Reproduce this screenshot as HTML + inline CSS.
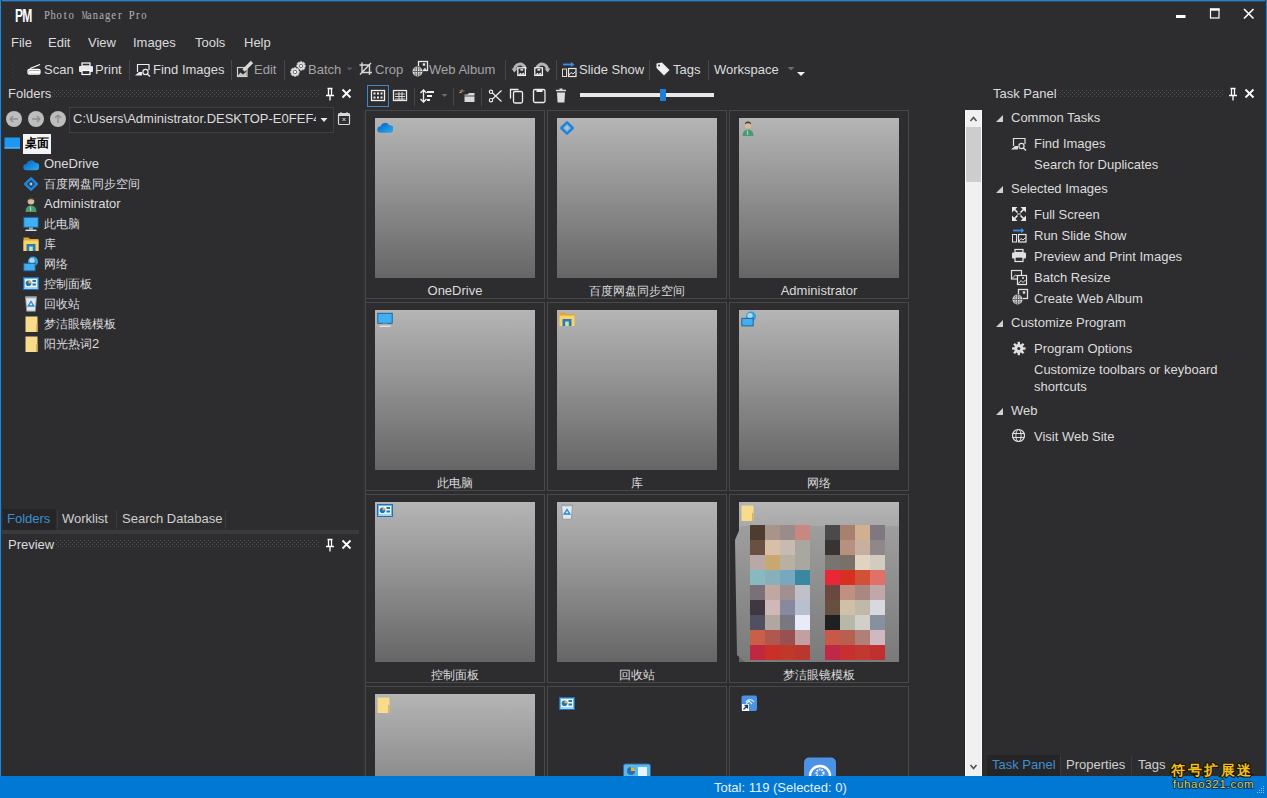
<!DOCTYPE html>
<html><head><meta charset="utf-8">
<style>
*{margin:0;padding:0;box-sizing:border-box}
html,body{width:1267px;height:798px;overflow:hidden;background:#2d2d30;font-family:"Liberation Sans",sans-serif;color:#dcdcdc;font-size:13px;position:relative}
.a{position:absolute}
.t{position:absolute;line-height:13px;white-space:nowrap;font-size:13px}
.dis{color:#a4a4a4}
.sep{position:absolute;width:1px;background:#47474b}
.grip{position:absolute;background-image:radial-gradient(circle,#505055 0.7px,transparent 0.8px);background-size:4px 4px}
svg{position:absolute;overflow:visible}
.cell{position:absolute;width:180px;height:189px;border:1px solid #484848}
.th{position:absolute;left:9px;top:7px;width:160px;height:160px;background:linear-gradient(#b5b5b5,#666666)}
.cj{font-size:12.1px}
.lab{position:absolute;left:0;width:178px;top:173px;text-align:center;line-height:13px;font-size:13px;color:#dcdcdc;white-space:nowrap}
</style></head><body>
<!-- window border -->
<div class="a" style="left:0;top:0;width:1267px;height:1px;background:#3b7db5"></div>
<div class="a" style="left:0;top:1px;width:1267px;height:1px;background:#1d4f80"></div>
<div class="a" style="left:0;top:0;width:1px;height:798px;background:#3b7db5"></div>
<div class="a" style="left:1px;top:0;width:1px;height:776px;background:#0f3a66"></div>
<div class="a" style="left:1266px;top:0;width:1px;height:798px;background:#3b7db5"></div>
<div class="a" style="left:1265px;top:0;width:1px;height:776px;background:#0f3a66"></div>

<!-- title bar -->
<div class="t" style="left:14.5px;top:7.5px;font-size:17.5px;line-height:17px;font-weight:bold;color:#fff;transform:scaleX(0.69);transform-origin:0 0;letter-spacing:-1px">PM</div>
<div class="t" style="left:44px;top:8.5px;font-family:'Liberation Serif',serif;font-size:12.5px;line-height:13px;color:#b4b4b4;transform:scaleX(0.85);transform-origin:0 0"><span style="display:inline-block;width:7.13px;text-align:center">P</span><span style="display:inline-block;width:7.13px;text-align:center">h</span><span style="display:inline-block;width:7.13px;text-align:center">o</span><span style="display:inline-block;width:7.13px;text-align:center">t</span><span style="display:inline-block;width:7.13px;text-align:center">o</span><span style="display:inline-block;width:7.13px;text-align:center">&nbsp;</span><span style="display:inline-block;width:7.13px;text-align:center;transform:scaleX(0.62)">M</span><span style="display:inline-block;width:7.13px;text-align:center">a</span><span style="display:inline-block;width:7.13px;text-align:center">n</span><span style="display:inline-block;width:7.13px;text-align:center">a</span><span style="display:inline-block;width:7.13px;text-align:center">g</span><span style="display:inline-block;width:7.13px;text-align:center">e</span><span style="display:inline-block;width:7.13px;text-align:center">r</span><span style="display:inline-block;width:7.13px;text-align:center">&nbsp;</span><span style="display:inline-block;width:7.13px;text-align:center">P</span><span style="display:inline-block;width:7.13px;text-align:center">r</span><span style="display:inline-block;width:7.13px;text-align:center">o</span></div>

<!-- menu -->
<div class="t" style="left:11px;top:36px">File</div>
<div class="t" style="left:48px;top:36px">Edit</div>
<div class="t" style="left:88px;top:36px">View</div>
<div class="t" style="left:133px;top:36px">Images</div>
<div class="t" style="left:195px;top:36px">Tools</div>
<div class="t" style="left:244px;top:36px">Help</div>

<!-- toolbar -->
<div class="t" style="left:44px;top:63px">Scan</div>
<div class="t" style="left:95px;top:63px">Print</div>
<div class="sep" style="left:129px;top:60px;height:20px"></div>
<div class="t" style="left:153px;top:63px">Find Images</div>
<div class="sep" style="left:231px;top:60px;height:20px"></div>
<div class="t dis" style="left:254px;top:63px">Edit</div>
<div class="sep" style="left:284px;top:60px;height:20px"></div>
<div class="t dis" style="left:308px;top:63px">Batch</div>
<div class="t dis" style="left:375px;top:63px">Crop</div>
<div class="t dis" style="left:429px;top:63px">Web Album</div>
<div class="sep" style="left:505px;top:60px;height:20px"></div>
<div class="sep" style="left:556px;top:60px;height:20px"></div>
<div class="t" style="left:579px;top:63px">Slide Show</div>
<div class="sep" style="left:649px;top:60px;height:20px"></div>
<div class="t" style="left:673px;top:63px">Tags</div>
<div class="sep" style="left:708px;top:60px;height:20px"></div>
<div class="t" style="left:714px;top:63px">Workspace</div>

<!-- LEFT PANEL -->
<div class="t" style="left:8px;top:87px">Folders</div>
<div class="a" style="left:69px;top:107px;width:265px;height:26px;border:1px solid #3f3f46;background:#2a2a2c"></div>
<div class="t" style="left:73px;top:112px;width:243px;overflow:hidden">C:\Users\Administrator.DESKTOP-E0FEF42</div>

<div class="a" style="left:23px;top:134px;width:28px;height:20px;background:#f4f4f4"></div>
<div class="t" style="left:25px;top:136px;color:#000;font-weight:bold"><span class="cj">桌面</span></div>
<div class="t" style="left:44px;top:157px">OneDrive</div>
<div class="t" style="left:44px;top:177px"><span class="cj">百度网盘同步空间</span></div>
<div class="t" style="left:44px;top:197px">Administrator</div>
<div class="t" style="left:44px;top:217px"><span class="cj">此电脑</span></div>
<div class="t" style="left:44px;top:237px"><span class="cj">库</span></div>
<div class="t" style="left:44px;top:257px"><span class="cj">网络</span></div>
<div class="t" style="left:44px;top:277px"><span class="cj">控制面板</span></div>
<div class="t" style="left:44px;top:297px"><span class="cj">回收站</span></div>
<div class="t" style="left:44px;top:317px"><span class="cj">梦洁眼镜模板</span></div>
<div class="t" style="left:44px;top:337px"><span class="cj">阳光热词</span>2</div>

<!-- left tabs -->
<div class="a" style="left:3px;top:509px;width:53px;height:21px;background:#252527"></div>
<div class="t" style="left:7px;top:512px;color:#3d8fd1">Folders</div>
<div class="sep" style="left:57px;top:510px;height:19px;background:#3c3c40"></div>
<div class="t" style="left:62px;top:512px;color:#cfcfcf">Worklist</div>
<div class="sep" style="left:116px;top:510px;height:19px;background:#3c3c40"></div>
<div class="t" style="left:122px;top:512px;color:#cfcfcf">Search Database</div>
<div class="sep" style="left:225px;top:510px;height:19px;background:#3c3c40"></div>
<div class="a" style="left:2px;top:530px;width:357px;height:4px;background:#3a3a3e"></div>
<div class="t" style="left:8px;top:538px">Preview</div>

<!-- CENTER -->
<div class="a" style="left:365px;top:110px;width:1px;height:666px;background:#48484c"></div>
<div class="a" style="left:363px;top:110px;width:1px;height:666px;background:#333336"></div>
<div class="a" style="left:580px;top:93px;width:134px;height:4px;background:#e8e8e8"></div>
<div class="a" style="left:660px;top:89px;width:6px;height:12px;background:#1e7fd8"></div>
<div class="a" style="left:367px;top:85px;width:22px;height:22px;border:1px solid #3f87c8"></div>
<div class="sep" style="left:414px;top:88px;height:18px"></div>
<div class="sep" style="left:453px;top:88px;height:18px"></div>
<div class="sep" style="left:481px;top:88px;height:18px"></div>

<div id="grid">
<div class="cell" style="left:365px;top:110px"><div class="th"></div><div class="lab">OneDrive</div></div>
<div class="cell" style="left:547px;top:110px"><div class="th"></div><div class="lab"><span class="cj">百度网盘同步空间</span></div></div>
<div class="cell" style="left:729px;top:110px"><div class="th"></div><div class="lab">Administrator</div></div>
<div class="cell" style="left:365px;top:302px"><div class="th"></div><div class="lab"><span class="cj">此电脑</span></div></div>
<div class="cell" style="left:547px;top:302px"><div class="th"></div><div class="lab"><span class="cj">库</span></div></div>
<div class="cell" style="left:729px;top:302px"><div class="th"></div><div class="lab"><span class="cj">网络</span></div></div>
<div class="cell" style="left:365px;top:494px"><div class="th"></div><div class="lab"><span class="cj">控制面板</span></div></div>
<div class="cell" style="left:547px;top:494px"><div class="th"></div><div class="lab"><span class="cj">回收站</span></div></div>
<div class="cell" style="left:729px;top:494px"><div class="th"></div><div class="lab"><span class="cj">梦洁眼镜模板</span></div></div>
<div class="cell" style="left:365px;top:686px"><div class="th"></div></div>
<div class="cell" style="left:547px;top:686px"></div>
<div class="cell" style="left:729px;top:686px"></div>
</div>

<!-- scrollbar -->
<div class="a" style="left:964px;top:110px;width:1px;height:666px;background:#252527"></div>
<div class="a" style="left:965px;top:110px;width:17px;height:666px;background:#f0f0f0;border-left:1px solid #fcfcfc;border-right:1px solid #fcfcfc"></div>
<div class="a" style="left:982px;top:110px;width:2px;height:666px;background:#2a2a30"></div>
<div class="a" style="left:966px;top:127px;width:15px;height:55px;background:#cdcdcd"></div>

<!-- RIGHT PANEL -->
<div class="t" style="left:993px;top:87px">Task Panel</div>

<div class="t" style="left:1011px;top:111px">Common Tasks</div>
<div class="t" style="left:1034px;top:137px">Find Images</div>
<div class="t" style="left:1034px;top:158px">Search for Duplicates</div>
<div class="t" style="left:1011px;top:182px">Selected Images</div>
<div class="t" style="left:1034px;top:208px">Full Screen</div>
<div class="t" style="left:1034px;top:229px">Run Slide Show</div>
<div class="t" style="left:1034px;top:250px">Preview and Print Images</div>
<div class="t" style="left:1034px;top:271px">Batch Resize</div>
<div class="t" style="left:1034px;top:292px">Create Web Album</div>
<div class="t" style="left:1011px;top:316px">Customize Program</div>
<div class="t" style="left:1034px;top:342px">Program Options</div>
<div class="t" style="left:1034px;top:363px">Customize toolbars or keyboard</div>
<div class="t" style="left:1034px;top:380px">shortcuts</div>
<div class="t" style="left:1011px;top:404px">Web</div>
<div class="t" style="left:1034px;top:430px">Visit Web Site</div>

<!-- right tabs -->
<div class="a" style="left:987px;top:755px;width:73px;height:21px;background:#252527"></div>
<div class="t" style="left:992px;top:758px;color:#3d8fd1">Task Panel</div>
<div class="sep" style="left:1060px;top:756px;height:19px;background:#3c3c40"></div>
<div class="t" style="left:1066px;top:758px;color:#cfcfcf">Properties</div>
<div class="sep" style="left:1131px;top:756px;height:19px;background:#3c3c40"></div>
<div class="t" style="left:1138px;top:758px;color:#cfcfcf">Tags</div>

<!-- status bar -->
<div class="a" style="left:0;top:776px;width:1267px;height:22px;background:#0078d4"></div>
<div class="t" style="left:714px;top:781px;color:#e6f0fa">Total: 119 (Selected: 0)</div>
<svg id="icons" class="a" style="left:0;top:0" width="1267" height="798" viewBox="0 0 1267 798">
<defs>
<pattern id="gp" width="4" height="4" patternUnits="userSpaceOnUse"><rect x="0" y="0" width="1" height="1" fill="#505056"/><rect x="2" y="2" width="1" height="1" fill="#505056"/></pattern>
<pattern id="gp2" width="4" height="4" patternUnits="userSpaceOnUse"><rect x="0" y="0" width="1" height="1" fill="#3c3c42"/><rect x="2" y="2" width="1" height="1" fill="#3c3c42"/></pattern>
<symbol id="i-desk" viewBox="0 0 16 16"><rect x="0.5" y="2.5" width="15.5" height="11" fill="#1e98f2"/><rect x="0.5" y="12.5" width="15.5" height="1" fill="#6cc4ff"/></symbol>
<symbol id="i-cloud" viewBox="0 0 16 16"><linearGradient id="cg" x1="0" y1="0" x2="1" y2="1"><stop offset="0" stop-color="#0a5cc0"/><stop offset="1" stop-color="#2ab0f0"/></linearGradient><path d="M3.3 14.3a3.1 3.1 0 0 1 0.2-6.2a4.8 4.8 0 0 1 8.8-1.4a3.8 3.8 0 0 1 0.8 7.6z" fill="url(#cg)"/></symbol>
<symbol id="i-baidu" viewBox="0 0 16 16"><path d="M8 2.3L13.7 8L8 13.7L2.3 8z" fill="none" stroke="#1f86e0" stroke-width="2.6" stroke-linejoin="round"/><path d="M8 6L10 8L8 10L6 8z" fill="#8cd0ff"/></symbol>
<symbol id="i-user" viewBox="0 0 16 16"><path d="M2.5 16Q2.5 9.5 8 9.5Q13.5 9.5 13.5 16z" fill="#4c9a74"/><circle cx="8" cy="5.2" r="3.3" fill="#d4bc98"/><path d="M4.8 4.5Q5 1.5 8 1.6Q11 1.5 11.2 4.5Q9.5 3 8 3.2Q6.2 3 4.8 4.5z" fill="#4a4030"/><path d="M7.3 10.5l0.5 4.5" stroke="#a8e8c0" stroke-width="1"/></symbol>
<symbol id="i-mon" viewBox="0 0 16 16"><rect x="0.8" y="1.3" width="14.4" height="10" fill="#3fb0f4" stroke="#1a5c94" stroke-width="0.9"/><rect x="6" y="11.5" width="4" height="2" fill="#9ab0c0"/><rect x="2.5" y="13.6" width="11" height="1.4" fill="#e0e4e8"/></symbol>
<symbol id="i-lib" viewBox="0 0 16 16"><path d="M0.5 1.5h5l1.5 1.5h8.5v12h-15z" fill="#dca830"/><rect x="0.5" y="4.5" width="15" height="10.5" fill="#f6d46a"/><path d="M3.5 8h9v7h-9z" fill="#2e78b8"/><rect x="6.2" y="10.5" width="3.6" height="4.5" fill="#c0e8a0"/></symbol>
<symbol id="i-net" viewBox="0 0 16 16"><circle cx="10" cy="5.5" r="5" fill="#3e9ed6"/><circle cx="9" cy="4.5" r="2.6" fill="#a8dcf4"/><rect x="0.8" y="7.3" width="11.4" height="7.6" fill="#40aef0" stroke="#1a5c94" stroke-width="0.9"/></symbol>
<symbol id="i-cp" viewBox="0 0 16 16"><rect x="0.5" y="1.5" width="15" height="12" fill="#60baf0" stroke="#2a6cb0" stroke-width="1"/><rect x="2" y="3" width="12" height="8.5" fill="#e8f4fc"/><circle cx="5.5" cy="7.2" r="2.8" fill="#2a70b0"/><path d="M5.5 7.2V4.4A2.8 2.8 0 0 1 8.3 7.2z" fill="#f0b428"/><rect x="9.5" y="4" width="3.5" height="2" fill="#2a70b0"/><rect x="9.5" y="7.5" width="3.5" height="2" fill="#2a70b0"/><rect x="1.5" y="12" width="13" height="1" fill="#90d8ff"/></symbol>
<symbol id="i-bin" viewBox="0 0 16 16"><path d="M2.5 0.8h11l-1.2 14.4h-8.6z" fill="#e4e8ec" stroke="#8a929a" stroke-width="0.8"/><path d="M2.5 1.5h11" stroke="#a0a8b0" stroke-width="1.5"/><path d="M8 5.5l2.8 4.5h-5.6z" fill="none" stroke="#2a88d8" stroke-width="1.4"/></symbol>
<symbol id="i-note" viewBox="0 0 16 16"><rect x="1.5" y="0.5" width="12" height="15.5" fill="#f8dc8c"/><rect x="12" y="8" width="1.5" height="8" fill="#d8b060"/></symbol>
<symbol id="i-short" viewBox="0 0 16 16"><rect x="0.5" y="0.5" width="15.5" height="15.5" rx="2" fill="#4b92e4"/><path d="M5 7a4.5 4.5 0 0 1 8 0M5 9l3-3l3 3" fill="none" stroke="#d8ecff" stroke-width="1.2"/><rect x="1" y="9" width="7" height="7" fill="#fff"/><path d="M2.5 14.5l4-4M3.5 10.5h3v3" stroke="#1a3a70" stroke-width="1.3" fill="none"/></symbol>
</defs>
<rect x="52" y="89" width="268" height="8" fill="url(#gp)"/>
<rect x="56" y="540" width="264" height="8" fill="url(#gp)"/>
<rect x="1058" y="89" width="166" height="8" fill="url(#gp)"/>
<rect x="12" y="58" width="4" height="22" fill="url(#gp2)"/>
<!-- mosaic -->
<linearGradient id="blobg" x1="0" y1="0" x2="0" y2="1"><stop offset="0" stop-color="#9e9e9e"/><stop offset="1" stop-color="#7a7a7a"/></linearGradient><path d="M741 526L899 526L899 662L745 662L737 655L736 600L735 540z" fill="url(#blobg)"/>
<rect x="750" y="525" width="15" height="15" fill="#4e3c30"/>
<rect x="765" y="525" width="15" height="15" fill="#a8948a"/>
<rect x="780" y="525" width="15" height="15" fill="#9a8c8a"/>
<rect x="795" y="525" width="15" height="15" fill="#c88880"/>
<rect x="825" y="525" width="15" height="15" fill="#4a4a4a"/>
<rect x="840" y="525" width="15" height="15" fill="#a88070"/>
<rect x="855" y="525" width="15" height="15" fill="#d0b090"/>
<rect x="870" y="525" width="15" height="15" fill="#807880"/>
<rect x="750" y="540" width="15" height="15" fill="#6a5040"/>
<rect x="765" y="540" width="15" height="15" fill="#d8c0a8"/>
<rect x="780" y="540" width="15" height="15" fill="#c8bab0"/>
<rect x="795" y="540" width="15" height="15" fill="#a8a8a0"/>
<rect x="825" y="540" width="15" height="15" fill="#383434"/>
<rect x="840" y="540" width="15" height="15" fill="#b89080"/>
<rect x="855" y="540" width="15" height="15" fill="#c8b0a0"/>
<rect x="870" y="540" width="15" height="15" fill="#908888"/>
<rect x="750" y="555" width="15" height="15" fill="#b8a8a8"/>
<rect x="765" y="555" width="15" height="15" fill="#c8a870"/>
<rect x="780" y="555" width="15" height="15" fill="#b8b0a0"/>
<rect x="795" y="555" width="15" height="15" fill="#a8a8a0"/>
<rect x="825" y="555" width="15" height="15" fill="#787470"/>
<rect x="840" y="555" width="15" height="15" fill="#7a7068"/>
<rect x="855" y="555" width="15" height="15" fill="#e0d4c0"/>
<rect x="870" y="555" width="15" height="15" fill="#d0ccc0"/>
<rect x="750" y="570" width="15" height="15" fill="#88b8c0"/>
<rect x="765" y="570" width="15" height="15" fill="#88b0b8"/>
<rect x="780" y="570" width="15" height="15" fill="#78a8c0"/>
<rect x="795" y="570" width="15" height="15" fill="#3888a0"/>
<rect x="825" y="570" width="15" height="15" fill="#e82838"/>
<rect x="840" y="570" width="15" height="15" fill="#d83020"/>
<rect x="855" y="570" width="15" height="15" fill="#d05038"/>
<rect x="870" y="570" width="15" height="15" fill="#e07068"/>
<rect x="750" y="585" width="15" height="15" fill="#7a7078"/>
<rect x="765" y="585" width="15" height="15" fill="#c0a8a0"/>
<rect x="780" y="585" width="15" height="15" fill="#a09090"/>
<rect x="795" y="585" width="15" height="15" fill="#c0c0c8"/>
<rect x="825" y="585" width="15" height="15" fill="#684840"/>
<rect x="840" y="585" width="15" height="15" fill="#c09080"/>
<rect x="855" y="585" width="15" height="15" fill="#a88880"/>
<rect x="870" y="585" width="15" height="15" fill="#c0a8a8"/>
<rect x="750" y="600" width="15" height="15" fill="#403840"/>
<rect x="765" y="600" width="15" height="15" fill="#d0b8b8"/>
<rect x="780" y="600" width="15" height="15" fill="#8888a0"/>
<rect x="795" y="600" width="15" height="15" fill="#b8c0d0"/>
<rect x="825" y="600" width="15" height="15" fill="#685040"/>
<rect x="840" y="600" width="15" height="15" fill="#d0c0a8"/>
<rect x="855" y="600" width="15" height="15" fill="#c0b8a8"/>
<rect x="870" y="600" width="15" height="15" fill="#d8d8e0"/>
<rect x="750" y="615" width="15" height="15" fill="#505060"/>
<rect x="765" y="615" width="15" height="15" fill="#b0a8a0"/>
<rect x="780" y="615" width="15" height="15" fill="#787880"/>
<rect x="795" y="615" width="15" height="15" fill="#e8ecf8"/>
<rect x="825" y="615" width="15" height="15" fill="#202020"/>
<rect x="840" y="615" width="15" height="15" fill="#b8b8a8"/>
<rect x="855" y="615" width="15" height="15" fill="#d0d0c8"/>
<rect x="870" y="615" width="15" height="15" fill="#8890a0"/>
<rect x="750" y="630" width="15" height="15" fill="#c86048"/>
<rect x="765" y="630" width="15" height="15" fill="#b05850"/>
<rect x="780" y="630" width="15" height="15" fill="#985050"/>
<rect x="795" y="630" width="15" height="15" fill="#c0a0a0"/>
<rect x="825" y="630" width="15" height="15" fill="#c85848"/>
<rect x="840" y="630" width="15" height="15" fill="#b86050"/>
<rect x="855" y="630" width="15" height="15" fill="#b08078"/>
<rect x="870" y="630" width="15" height="15" fill="#d0b8c0"/>
<rect x="750" y="645" width="15" height="15" fill="#c02840"/>
<rect x="765" y="645" width="15" height="15" fill="#c83028"/>
<rect x="780" y="645" width="15" height="15" fill="#c03828"/>
<rect x="795" y="645" width="15" height="15" fill="#b83830"/>
<rect x="825" y="645" width="15" height="15" fill="#c02848"/>
<rect x="840" y="645" width="15" height="15" fill="#c83030"/>
<rect x="855" y="645" width="15" height="15" fill="#c03830"/>
<rect x="870" y="645" width="15" height="15" fill="#c03030"/>
<!-- row4 big icons -->
<clipPath id="clipst"><rect x="0" y="0" width="1267" height="776"/></clipPath>
<g clip-path="url(#clipst)">
<rect x="623.5" y="764" width="27" height="14" rx="2" fill="#5ab8f0" stroke="#2a6cb0"/>
<circle cx="631" cy="771" r="4" fill="#2a70b0"/><path d="M631 771v-4a4 4 0 0 1 4 4z" fill="#f0b428"/>
<rect x="638" y="767" width="9" height="9" fill="#e8f4fc"/>
<rect x="804" y="757.5" width="32" height="30" rx="5" fill="#4b92e4"/>
<path d="M810 776a10 10 0 0 1 20 0" fill="none" stroke="#fff" stroke-width="2.4"/>
<circle cx="820" cy="773" r="3.5" fill="none" stroke="#fff" stroke-width="2" stroke-dasharray="1.5 1"/>
</g>
<!-- watermark -->
<text x="1171" y="775" font-family="Liberation Sans" font-size="13.5" font-weight="bold" fill="#f2c01c" stroke="#1a1200" stroke-width="2" paint-order="stroke" letter-spacing="2.6">符号扩展迷</text>
<text x="1173" y="787.5" font-family="Liberation Sans" font-size="11.5" fill="#d0d068" stroke="#0a2a4a" stroke-width="1.6" paint-order="stroke" letter-spacing="0.7">fuhao321.com</text>
<!-- tree icons -->
<use href="#i-desk" x="4" y="135" width="16" height="16"/>
<use href="#i-cloud" x="23" y="156" width="16" height="16"/>
<use href="#i-baidu" x="23" y="176" width="16" height="16"/>
<use href="#i-user" x="23" y="196" width="16" height="16"/>
<use href="#i-mon" x="23" y="216" width="16" height="16"/>
<use href="#i-lib" x="23" y="236" width="16" height="16"/>
<use href="#i-net" x="23" y="256" width="16" height="16"/>
<use href="#i-cp" x="23" y="276" width="16" height="16"/>
<use href="#i-bin" x="23" y="296" width="16" height="16"/>
<use href="#i-note" x="24" y="316" width="16" height="16"/>
<use href="#i-note" x="24" y="336" width="16" height="16"/>
<!-- thumb icons -->
<use href="#i-cloud" x="377" y="118.5" width="16" height="16"/>
<use href="#i-baidu" x="559" y="120" width="16" height="16"/>
<use href="#i-user" x="740" y="120" width="16" height="16"/>
<use href="#i-mon" x="377" y="312" width="16" height="16"/>
<use href="#i-lib" x="559" y="311" width="16" height="16"/>
<use href="#i-net" x="741" y="311" width="16" height="16"/>
<use href="#i-cp" x="377" y="503" width="16" height="16"/>
<use href="#i-bin" x="559" y="504" width="16" height="16"/>
<use href="#i-note" x="740" y="505" width="16" height="16"/>
<use href="#i-note" x="376" y="697" width="16" height="16"/>
<use href="#i-cp" x="559" y="696" width="16" height="16"/>
<use href="#i-short" x="741" y="695" width="16" height="16"/>
<!-- window controls -->
<rect x="1176" y="15" width="9.5" height="3" fill="#fff"/>
<rect x="1210.5" y="9" width="8.5" height="9" fill="none" stroke="#fff" stroke-width="1.2"/>
<rect x="1210" y="8.5" width="9.5" height="2.2" fill="#fff"/>
<path d="M1244 9L1253.5 18.5M1253.5 9L1244 18.5" stroke="#fff" stroke-width="1.6"/>
<!-- toolbar grip -->
<!-- scan -->
<path d="M28.5 70.5h10a1.5 1.5 0 0 1 1.5 1.5v1.5h-11.5z" fill="#fff"/>
<rect x="28" y="69.5" width="12" height="4.5" rx="1.2" fill="none" stroke="#fff" stroke-width="1.3"/>
<path d="M30 68.5L40 64.5" stroke="#fff" stroke-width="1.3"/>
<!-- print -->
<rect x="82" y="63" width="8" height="3" fill="none" stroke="#fff" stroke-width="1.2"/>
<rect x="79" y="66" width="14" height="6" rx="1" fill="#e8e8e8"/>
<rect x="82" y="70.5" width="8" height="4" fill="#2d2d30" stroke="#fff" stroke-width="1.2"/>
<!-- find images -->
<path d="M137.5 72V64.5H149V70" fill="none" stroke="#eee" stroke-width="1.2"/>
<path d="M135 75.5L139 72H142V75.5z" fill="#e8e8e8"/>
<circle cx="145.5" cy="72" r="2.6" fill="none" stroke="#eee" stroke-width="1.2"/>
<path d="M147.3 74L150 76.5" stroke="#eee" stroke-width="1.3"/>
<!-- edit -->
<rect x="237.5" y="67.5" width="9.5" height="9" fill="none" stroke="#d0d0d0" stroke-width="1.2"/>
<path d="M238 75.5L240.5 72.5L243 74.5L246.5 71.5V76.5H238z" fill="#c8c8c8"/>
<path d="M243.5 70.5L252 62" stroke="#d8d8d8" stroke-width="3.2"/>
<!-- batch gears -->
<circle cx="301" cy="66" r="5" fill="#dcdcdc" stroke="#2d2d30" stroke-width="0.6"/>
<circle cx="305.25" cy="67.76" r="0.7" fill="#3a3a3e"/>
<circle cx="302.76" cy="70.25" r="0.7" fill="#3a3a3e"/>
<circle cx="299.24" cy="70.25" r="0.7" fill="#3a3a3e"/>
<circle cx="296.75" cy="67.76" r="0.7" fill="#3a3a3e"/>
<circle cx="296.75" cy="64.24" r="0.7" fill="#3a3a3e"/>
<circle cx="299.24" cy="61.75" r="0.7" fill="#3a3a3e"/>
<circle cx="302.76" cy="61.75" r="0.7" fill="#3a3a3e"/>
<circle cx="305.25" cy="64.24" r="0.7" fill="#3a3a3e"/>
<circle cx="301" cy="66" r="1.7" fill="#f4f4f4" stroke="#555" stroke-width="0.8"/>
<circle cx="295" cy="72" r="5" fill="#dcdcdc" stroke="#2d2d30" stroke-width="0.6"/>
<circle cx="299.25" cy="73.76" r="0.7" fill="#3a3a3e"/>
<circle cx="296.76" cy="76.25" r="0.7" fill="#3a3a3e"/>
<circle cx="293.24" cy="76.25" r="0.7" fill="#3a3a3e"/>
<circle cx="290.75" cy="73.76" r="0.7" fill="#3a3a3e"/>
<circle cx="290.75" cy="70.24" r="0.7" fill="#3a3a3e"/>
<circle cx="293.24" cy="67.75" r="0.7" fill="#3a3a3e"/>
<circle cx="296.76" cy="67.75" r="0.7" fill="#3a3a3e"/>
<circle cx="299.25" cy="70.24" r="0.7" fill="#3a3a3e"/>
<circle cx="295" cy="72" r="1.7" fill="#f4f4f4" stroke="#555" stroke-width="0.8"/>
<path d="M346.5 67.5h6l-3 3z" fill="#5a5a5e"/>
<!-- crop -->
<path d="M362 62.5V72.5H372M359.5 65H369.5V75M360 74.5L371 63" fill="none" stroke="#d8d8d8" stroke-width="1.4"/>
<!-- web album -->
<rect x="418.5" y="61.5" width="9" height="9" fill="none" stroke="#e8e8e8" stroke-width="1.3"/>
<rect x="422.8" y="63.3" width="2.4" height="2.4" fill="#e8e8e8"/>
<path d="M423 70l2-2.5l1.5 2.5z" fill="#d8d8d8"/>
<circle cx="417.5" cy="71.5" r="5.6" fill="#2d2d30"/>
<circle cx="417.5" cy="71.5" r="5" fill="#e4e4e4"/>
<path d="M412.5 71.5h10M417.5 66.5v10" stroke="#555" stroke-width="0.9"/>
<ellipse cx="417.5" cy="71.5" rx="2.5" ry="5" fill="none" stroke="#666" stroke-width="0.8"/>
<path d="M413.3 69h8.4M413.3 74h8.4" stroke="#777" stroke-width="0.7"/>
<!-- rotate -->
<path d="M514.5 71A5.5 5.8 0 0 1 525.5 69" fill="none" stroke="#b4b4b4" stroke-width="3"/>
<path d="M511.5 68.5h6l-3 4z" fill="#b4b4b4"/>
<rect x="517.8" y="67.8" width="7.6" height="7.6" fill="#2d2d30" stroke="#f0f0f0" stroke-width="1.3"/>
<ellipse cx="521.8" cy="69.8" rx="1.6" ry="0.9" fill="#f0f0f0"/>
<path d="M518.5 74.8l1.8-2l1.5 1.2l1.5-1.5l1.6 2.3z" fill="#f0f0f0"/>
<path d="M547.5 71A5.5 5.8 0 0 0 536.5 69" fill="none" stroke="#b4b4b4" stroke-width="3"/>
<path d="M550.5 68.5h-6l3 4z" fill="#b4b4b4"/>
<rect x="534.8" y="67.8" width="7.6" height="7.6" fill="#2d2d30" stroke="#f0f0f0" stroke-width="1.3"/>
<ellipse cx="538.8" cy="69.8" rx="1.6" ry="0.9" fill="#f0f0f0"/>
<path d="M535.5 74.8l1.8-2l1.5 1.2l1.5-1.5l1.6 2.3z" fill="#f0f0f0"/>
<!-- slide show -->
<path d="M563 64.5h9" stroke="#3a8ee8" stroke-width="1.8"/><path d="M571 62l3.5 2.5l-3.5 2.5z" fill="#3a8ee8"/>
<rect x="562.5" y="69" width="4" height="7.5" fill="none" stroke="#e0d8c8" stroke-width="1"/>
<rect x="568.5" y="68.5" width="7.5" height="8" fill="none" stroke="#e8e8e8" stroke-width="1.2"/>
<path d="M569 75l2-2.5l2 1.5l2.5-2.5" stroke="#e8e8e8" stroke-width="1" fill="none"/>
<!-- tags -->
<path d="M656.5 63.5L662 62.5L669.5 70L664 75.5L656.5 68z" fill="#f0f0f0"/>
<circle cx="659" cy="65.5" r="1" fill="#2d2d30"/>
<!-- workspace arrows -->
<path d="M787.5 67h7l-3.5 3.5z" fill="#6a6a6e"/>
<path d="M797 72h8l-4 4z" fill="#f0f0f0"/>
<!-- pins & close -->
<g id="pinx">
<path d="M327.5 88.5h5M328.5 88.5v7M331.5 88.5v7M326 95.5h8M330 95.5v5" stroke="#fff" stroke-width="1.3" fill="none"/>
<path d="M342.5 89.5l8 8M350.5 89.5l-8 8" stroke="#fff" stroke-width="1.8"/>
</g>
<use href="#pinx" x="0" y="451"/>
<use href="#pinx" x="903" y="0"/>
<!-- nav circles -->
<circle cx="14" cy="119" r="8" fill="#bdbdbd"/><path d="M10 119h8M10 119l3-3M10 119l3 3" stroke="#8f8f8f" stroke-width="1.4" fill="none"/>
<circle cx="36" cy="119" r="8" fill="#bdbdbd"/><path d="M32 119h8M40 119l-3-3M40 119l-3 3" stroke="#8f8f8f" stroke-width="1.4" fill="none"/>
<circle cx="58" cy="119" r="8" fill="#bdbdbd"/><path d="M58 115v8M58 115l-3 3M58 115l3 3" stroke="#8f8f8f" stroke-width="1.4" fill="none"/>
<!-- combo arrow & calendar -->
<path d="M320.5 118h7l-3.5 4z" fill="#e8e8e8"/>
<rect x="338.5" y="113.5" width="11" height="11" rx="1" fill="none" stroke="#d8d8d8" stroke-width="1.2"/>
<path d="M338.5 115h11" stroke="#d8d8d8" stroke-width="2"/>
<path d="M341 112v2M347 112v2" stroke="#d8d8d8" stroke-width="1"/>
<path d="M342.5 118l3 3M345.5 118l-3 3" stroke="#d8d8d8" stroke-width="1"/>
<!-- view toolbar -->
<rect x="371.5" y="90.5" width="13" height="10" fill="none" stroke="#f0f0f0" stroke-width="1.3"/>
<g fill="#f0f0f0"><rect x="373.5" y="92.5" width="2" height="2"/><rect x="377" y="92.5" width="2" height="2"/><rect x="380.5" y="92.5" width="2" height="2"/><rect x="373.5" y="96.5" width="2" height="2"/><rect x="377" y="96.5" width="2" height="2"/><rect x="380.5" y="96.5" width="2" height="2"/></g>
<rect x="393.5" y="90.5" width="13" height="10" fill="none" stroke="#e8e8e8" stroke-width="1.3"/>
<path d="M395 94h10M395 96.5h10M395 99h10M399 92v8M402 92v8" stroke="#e8e8e8" stroke-width="0.9"/>
<!-- sort -->
<path d="M423.5 90v12M420.5 93l3-3l3 3M420.5 99l3 3l3-3" stroke="#f0f0f0" stroke-width="1.3" fill="none"/>
<rect x="427" y="91" width="7" height="2" fill="#f0f0f0"/><rect x="427" y="95" width="5" height="2" fill="#f0f0f0"/><rect x="427" y="99" width="3" height="2" fill="#f0f0f0"/>
<path d="M441.5 94h6l-3 3z" fill="#6a6a6e"/>
<!-- new folder -->
<path d="M464.5 94.5h3l1.5-1.5h5.5v9h-10z" fill="#d8d8d8"/>
<path d="M464 96h11" stroke="#2d2d30" stroke-width="0.8"/>
<path d="M462 89.5v2M459.5 92.5h2M460 90.5l1.3 1.3M464 90.5l-1 1" stroke="#e0b080" stroke-width="1"/>
<!-- scissors -->
<circle cx="491" cy="91.8" r="1.7" fill="none" stroke="#eee" stroke-width="1.1"/>
<circle cx="491" cy="100.2" r="1.7" fill="none" stroke="#eee" stroke-width="1.1"/>
<path d="M492.5 93L501.5 101.5M492.5 99L501.5 90.5" stroke="#eee" stroke-width="1.2"/>
<!-- copy -->
<path d="M510.5 98.5V89.5H518.5" fill="none" stroke="#eee" stroke-width="1.3"/>
<rect x="513.5" y="91.5" width="9" height="11.5" rx="1.5" fill="none" stroke="#eee" stroke-width="1.3"/>
<!-- paste -->
<rect x="533.5" y="89.5" width="11.5" height="13" rx="1.5" fill="none" stroke="#eee" stroke-width="1.3"/>
<rect x="536.5" y="89" width="6" height="3" fill="#eee"/>
<!-- delete -->
<path d="M556 90.5h10" stroke="#ddd" stroke-width="1.5"/><rect x="559.5" y="88.5" width="3" height="1.5" fill="#ddd"/>
<path d="M557 92.5h8l-0.6 10h-6.8z" fill="#ddd"/>
<!-- scrollbar arrows -->
<path d="M970.5 121l3-3.5l3 3.5" stroke="#505050" stroke-width="1.6" fill="none"/>
<path d="M970.5 765l3 3.5l3-3.5" stroke="#505050" stroke-width="1.6" fill="none"/>
<!-- task triangles -->
<path d="M996 122h7v-7z" fill="#d0d0d0"/>
<path d="M996 193h7v-7z" fill="#d0d0d0"/>
<path d="M996 327h7v-7z" fill="#d0d0d0"/>
<path d="M996 415h7v-7z" fill="#d0d0d0"/>
<!-- task icons -->
<g transform="translate(876,74)">
<path d="M137.5 72V64.5H149V70" fill="none" stroke="#e0e0e0" stroke-width="1.2"/>
<path d="M135 75.5L139 72H142V75.5z" fill="#dcdcdc"/>
<circle cx="145.5" cy="72" r="2.6" fill="none" stroke="#e0e0e0" stroke-width="1.2"/>
<path d="M147.3 74L150 76.5" stroke="#e0e0e0" stroke-width="1.3"/>
</g>
<!-- full screen -->
<g stroke="#e8e8e8" stroke-width="1.7" fill="none">
<path d="M1013.5 208.5l4 4M1024.5 208.5l-4 4M1013.5 219.5l4-4M1024.5 219.5l-4-4"/>
</g>
<g fill="#e8e8e8">
<path d="M1012 207h5.5l-5.5 5.5z"/><path d="M1026 207h-5.5l5.5 5.5z"/><path d="M1012 221h5.5l-5.5-5.5z"/><path d="M1026 221h-5.5l5.5-5.5z"/>
<path d="M1017 213.5h4v1h-4z"/>
</g>
<!-- run slideshow -->
<path d="M1013 230.5h9" stroke="#3a8ee8" stroke-width="1.8"/><path d="M1021 228l3.5 2.5l-3.5 2.5z" fill="#3a8ee8"/>
<rect x="1012.5" y="234.5" width="4" height="7.5" fill="none" stroke="#e0e0e0" stroke-width="1"/>
<rect x="1018.5" y="234.5" width="7.5" height="7.5" fill="none" stroke="#e8e8e8" stroke-width="1.2"/>
<path d="M1019 241l2-2.5l2 1.5l2.5-2.5" stroke="#e8e8e8" stroke-width="1" fill="none"/>
<!-- print -->
<rect x="1015" y="249.5" width="8" height="3" fill="none" stroke="#e8e8e8" stroke-width="1.2"/>
<rect x="1012" y="252.5" width="14" height="6" rx="1" fill="#e0e0e0"/>
<rect x="1015" y="257" width="8" height="4.5" fill="#2d2d30" stroke="#e8e8e8" stroke-width="1.2"/>
<!-- batch resize -->
<rect x="1011.5" y="270.5" width="10" height="8.5" fill="none" stroke="#e0e0e0" stroke-width="1.2"/>
<path d="M1012.5 278l3-3l3 2" stroke="#e0e0e0" stroke-width="1" fill="none"/>
<rect x="1017.5" y="275.5" width="9" height="9" fill="#2d2d30" stroke="#e8e8e8" stroke-width="1.2"/>
<path d="M1018.5 283.5l2.5-3l2 2l2.5-2.5" stroke="#e8e8e8" stroke-width="1" fill="none"/>
<circle cx="1023" cy="278" r="1" fill="#e8e8e8"/>
<!-- web album task -->
<rect x="1018.5" y="289.5" width="9" height="9" fill="none" stroke="#e0e0e0" stroke-width="1.3"/>
<rect x="1022.8" y="291.3" width="2.4" height="2.4" fill="#e0e0e0"/>
<circle cx="1017.5" cy="299.5" r="5.6" fill="#2d2d30"/>
<circle cx="1017.5" cy="299.5" r="5" fill="#dcdcdc"/>
<path d="M1012.5 299.5h10M1017.5 294.5v10" stroke="#555" stroke-width="0.9"/>
<ellipse cx="1017.5" cy="299.5" rx="2.5" ry="5" fill="none" stroke="#666" stroke-width="0.8"/>
<path d="M1013.3 297h8.4M1013.3 302h8.4" stroke="#777" stroke-width="0.7"/>
<!-- gear -->
<circle cx="1018.8" cy="348.5" r="4.6" fill="#dedede"/>
<rect x="1017.6" y="341.8" width="2.4" height="3" fill="#dedede" transform="rotate(0 1018.8 348.5)"/>
<rect x="1017.6" y="341.8" width="2.4" height="3" fill="#dedede" transform="rotate(45 1018.8 348.5)"/>
<rect x="1017.6" y="341.8" width="2.4" height="3" fill="#dedede" transform="rotate(90 1018.8 348.5)"/>
<rect x="1017.6" y="341.8" width="2.4" height="3" fill="#dedede" transform="rotate(135 1018.8 348.5)"/>
<rect x="1017.6" y="341.8" width="2.4" height="3" fill="#dedede" transform="rotate(180 1018.8 348.5)"/>
<rect x="1017.6" y="341.8" width="2.4" height="3" fill="#dedede" transform="rotate(225 1018.8 348.5)"/>
<rect x="1017.6" y="341.8" width="2.4" height="3" fill="#dedede" transform="rotate(270 1018.8 348.5)"/>
<rect x="1017.6" y="341.8" width="2.4" height="3" fill="#dedede" transform="rotate(315 1018.8 348.5)"/>
<circle cx="1018.8" cy="348.5" r="1.5" fill="#2d2d30"/>
<!-- globe -->
<circle cx="1018.5" cy="435.5" r="6" fill="none" stroke="#e0e0e0" stroke-width="1.2"/>
<ellipse cx="1018.5" cy="435.5" rx="2.6" ry="6" fill="none" stroke="#e0e0e0" stroke-width="1"/>
<path d="M1012.5 433.5h12M1012.5 437.5h12" stroke="#e0e0e0" stroke-width="1"/>
<!-- status grip -->
<g fill="#8cc4f0"><rect x="1263" y="786" width="1" height="1"/><rect x="1261" y="788" width="1" height="1"/><rect x="1263" y="788" width="1" height="1"/><rect x="1259" y="790" width="1" height="1"/><rect x="1261" y="790" width="1" height="1"/><rect x="1263" y="790" width="1" height="1"/><rect x="1257" y="792" width="1" height="1"/><rect x="1259" y="792" width="1" height="1"/><rect x="1261" y="792" width="1" height="1"/><rect x="1263" y="792" width="1" height="1"/></g>
</svg>
</body></html>
